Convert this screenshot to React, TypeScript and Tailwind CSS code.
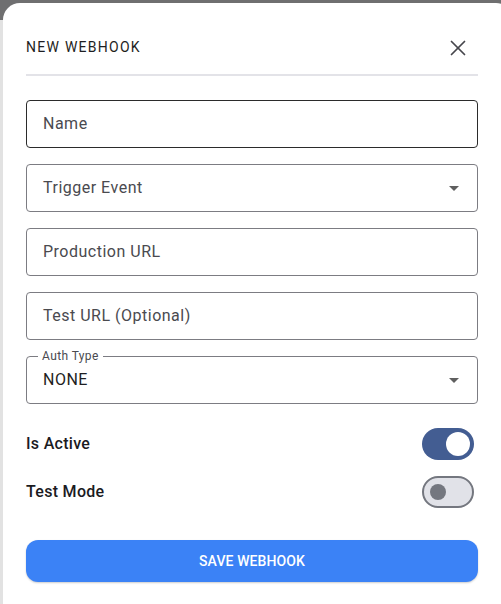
import { X } from 'lucide-react';

function Caret() {
  return (
    <svg width="10" height="5" viewBox="0 0 10 5" className="text-[#5f5f5f]">
      <path d="M0 0h10L5 5z" fill="currentColor" />
    </svg>
  );
}

function Field({ label, dark, select }: { label: string; dark?: boolean; select?: boolean }) {
  return (
    <div
      className={`flex h-12 items-center justify-between rounded-[4px] border px-4 ${
        dark ? 'border-[#2b2b2b]' : 'border-[#7c7c82]'
      }`}
    >
      <span className="text-base tracking-[0.5px] text-[#4a4a4f]">{label}</span>
      {select && <span className="mr-[2px]"><Caret /></span>}
    </div>
  );
}

function Toggle({ on }: { on: boolean }) {
  return on ? (
    <div className="flex h-8 w-[52px] items-center justify-end rounded-full bg-[#435d92] pr-1">
      <div className="h-6 w-6 rounded-full bg-white" />
    </div>
  ) : (
    <div className="flex h-8 w-[52px] items-center rounded-full border-2 border-[#74777f] bg-[#e1e2e8] pl-[6px]">
      <div className="h-4 w-4 rounded-full bg-[#74777f]" />
    </div>
  );
}

export default function App() {
  return (
    <div
      className="h-[604px] w-[501px] overflow-hidden pl-[3px] pt-[3px] bg-[linear-gradient(#6f6f70_0px,#6f6f70_20px,#e2e2e2_20px)]"
      style={{ fontFamily: 'Roboto, "Noto Sans", sans-serif' }}
    >
      <div className="h-[640px] w-[510px] rounded-tl-[17px] rounded-tr-[17px] bg-white">
        <div className="w-[452px] ml-[23px]">
          {/* header */}
          <div className="flex h-[71px] items-center justify-between pt-[18px]">
            <h2 className="text-[14px] font-normal tracking-[0.09em] text-[#1e1e22]">NEW WEBHOOK</h2>
            <X size={26} strokeWidth={1.6} className="mr-[7px] text-[#46464c]" />
          </div>
          <div className="h-[2px] bg-[#e3e3e8]" />

          {/* fields */}
          <div className="mt-6 flex flex-col gap-4">
            <Field label="Name" dark />
            <Field label="Trigger Event" select />
            <Field label="Production URL" />
            <Field label="Test URL (Optional)" />
            <div className="relative">
              <span className="absolute -top-[8px] left-[12px] bg-white px-1 text-[12px] leading-4 tracking-[0.4px] text-[#4a4a4f]">
                Auth Type
              </span>
              <div className="flex h-12 items-center justify-between rounded-[4px] border border-[#7c7c82] px-4">
                <span className="text-base tracking-[0.5px] text-[#1e1e22]">NONE</span>
                <span className="mr-[2px]"><Caret /></span>
              </div>
            </div>
          </div>

          {/* toggles */}
          <div className="mt-6 flex flex-col gap-4">
            <div className="flex items-center justify-between pr-1">
              <span className="text-base font-medium tracking-[0.3px] text-[#1b1b1f]">Is Active</span>
              <Toggle on />
            </div>
            <div className="flex items-center justify-between pr-1">
              <span className="text-base font-medium tracking-[0.3px] text-[#1b1b1f]">Test Mode</span>
              <Toggle on={false} />
            </div>
          </div>

          <button className="mt-8 flex h-[42px] w-full items-center justify-center rounded-[12px] bg-[#3b82f6] text-[14px] font-medium tracking-[0.1px] text-white shadow-[0_1px_2px_rgba(0,0,0,0.2)]">
            SAVE WEBHOOK
          </button>
        </div>
      </div>
    </div>
  );
}
